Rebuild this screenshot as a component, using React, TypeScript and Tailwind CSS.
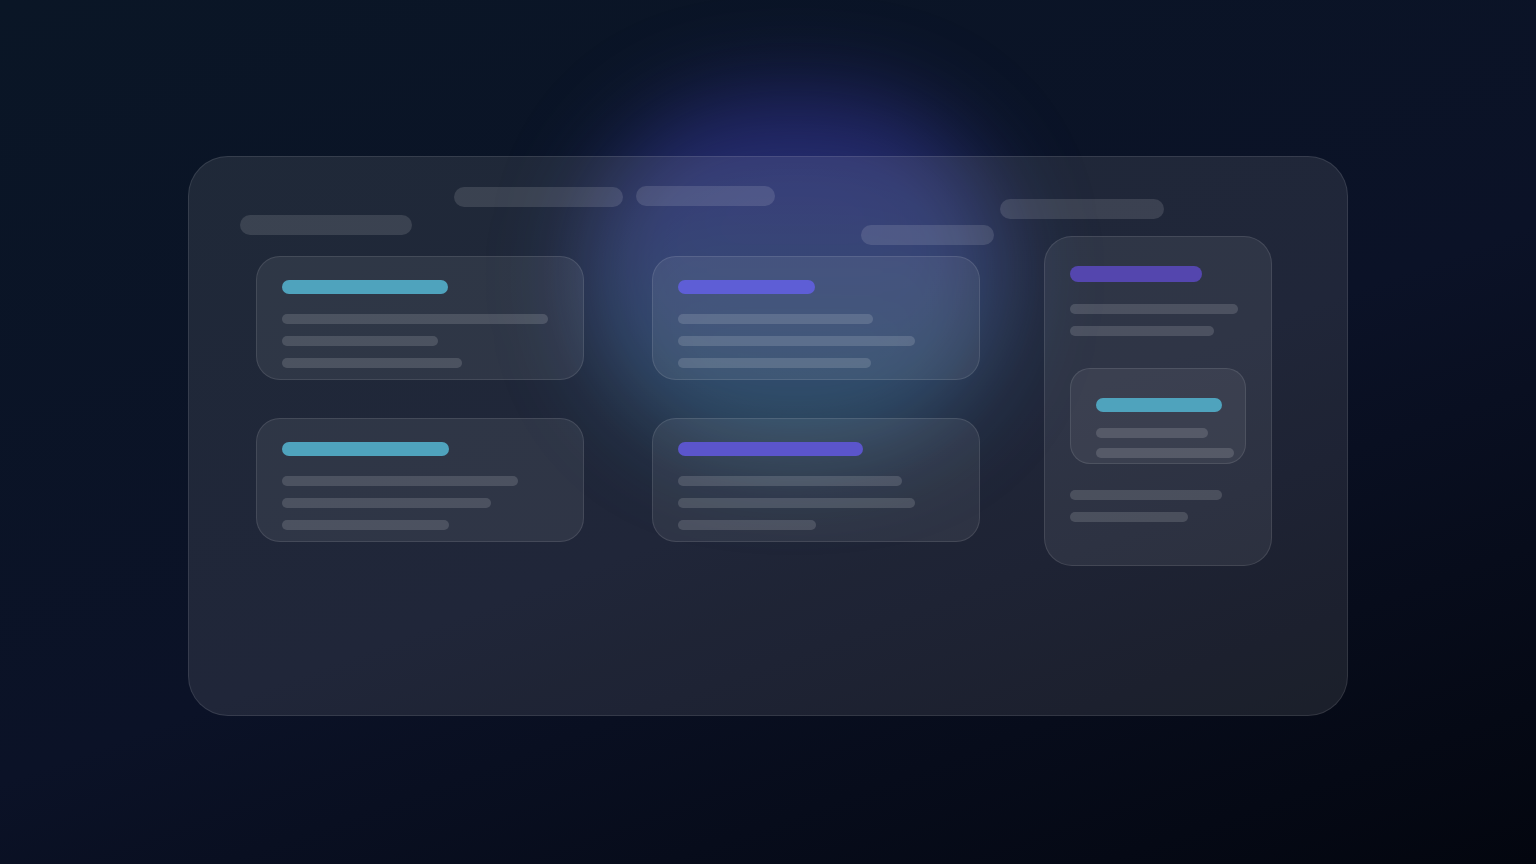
import React from "react";

function Bar({ w, h = 10, className = "bg-white/[0.14]" }: { w: number; h?: number; className?: string }) {
	return <div className={`rounded-full ${className}`} style={{ width: w, height: h }} />;
}

function Card({ accent, title, lines }: { accent: string; title: number; lines: number[] }) {
	return (
		<div className="h-[124px] w-[328px] rounded-[24px] border border-white/10 bg-white/[0.07] pt-[23px] pl-[25px]">
			<Bar w={title} h={14} className={accent} />
			<div className="mt-[20px] flex flex-col gap-[12px]">
				{lines.map((w, i) => (
					<Bar key={i} w={w} />
				))}
			</div>
		</div>
	);
}

export default function App() {
	return (
		<div className="relative flex h-screen w-full justify-center overflow-hidden bg-[linear-gradient(160deg,#0a1626_0%,#0b1227_55%,#03060f_100%)] pt-[156px]">
			{/* glow behind the board */}
			<div className="pointer-events-none absolute left-[585px] top-[95px] h-[360px] w-[420px] rounded-full bg-[linear-gradient(180deg,rgba(67,56,202,0.45)_0%,rgba(72,96,190,0.45)_45%,rgba(47,138,163,0.4)_100%)] blur-[45px]" />

			{/* board */}
			<div className="relative flex h-[560px] w-[1160px] rounded-[40px] border border-white/10 bg-white/[0.085] pl-[51px] pt-[29px]">
				{/* left area */}
				<div className="flex w-[754px] flex-col">
					<div className="flex items-start">
						<div className="mt-[29px]"><Bar w={172} h={20} className="bg-white/[0.12]" /></div>
						<div className="ml-[42px] mt-[1px]"><Bar w={169} h={20} className="bg-white/[0.12]" /></div>
						<div className="ml-[13px]"><Bar w={139} h={20} className="bg-white/[0.12]" /></div>
						<div className="ml-[86px] mt-[39px]"><Bar w={133} h={20} className="bg-white/[0.12]" /></div>
					</div>
					<div className="ml-[16px] mt-[11px] grid grid-cols-[328px_328px] gap-x-[68px] gap-y-[38px]">
						<Card accent="bg-[#4fa3bd]" title={166} lines={[266, 156, 180]} />
						<Card accent="bg-[#5e5ed6]" title={137} lines={[195, 237, 193]} />
						<Card accent="bg-[#4fa3bd]" title={167} lines={[236, 209, 167]} />
						<Card accent="bg-[#5b55cc]" title={185} lines={[224, 237, 138]} />
					</div>
				</div>

				{/* right column */}
				<div className="ml-[6px] flex flex-col">
					<div className="mt-[13px]"><Bar w={164} h={20} className="bg-white/[0.12]" /></div>
					<div className="ml-[44px] mt-[17px] h-[330px] w-[228px] rounded-[28px] border border-white/10 bg-white/[0.07] pl-[25px] pt-[29px]">
						<Bar w={132} h={16} className="bg-[#5446ae]" />
						<div className="mt-[22px] flex flex-col gap-[12px]">
							<Bar w={168} />
							<Bar w={144} />
						</div>
						<div className="mt-[32px] h-[96px] w-[176px] rounded-[20px] border border-white/10 bg-white/[0.06] pl-[25px] pt-[29px]">
							<Bar w={126} h={14} className="bg-[#4fa3bd]" />
							<div className="mt-[16px] flex flex-col gap-[10px]">
								<Bar w={112} />
								<Bar w={138} />
							</div>
						</div>
						<div className="mt-[26px] flex flex-col gap-[12px]">
							<Bar w={152} />
							<Bar w={118} />
						</div>
					</div>
				</div>
			</div>
		</div>
	);
}
